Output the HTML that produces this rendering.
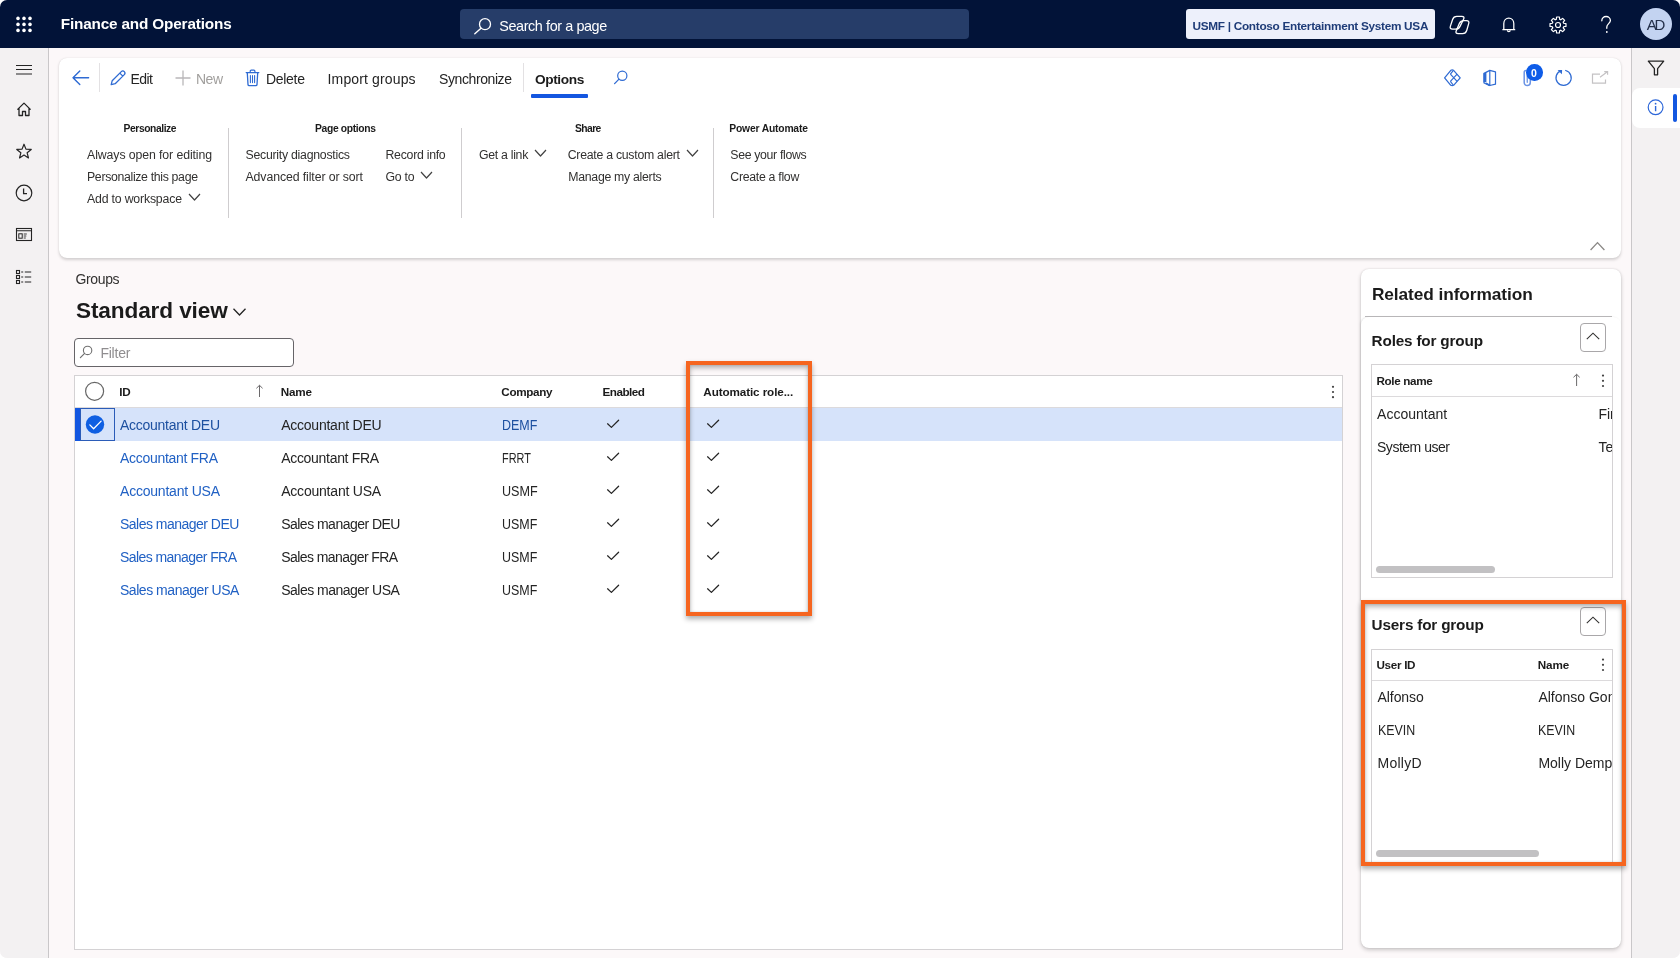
<!DOCTYPE html><html><head><meta charset="utf-8"><style>
html,body{margin:0;padding:0;background:#ffffff;}
body{width:1680px;height:958px;overflow:hidden;position:relative;font-family:"Liberation Sans",sans-serif;}
#app{position:absolute;left:0;top:0;width:1680px;height:958px;background:#fcf8f9;border-radius:7px;overflow:hidden;}
.a{position:absolute;}
.t{position:absolute;line-height:1;white-space:nowrap;}
#app{will-change:transform;}
</style></head><body><div id="app">
<div class="a" style="left:0px;top:0px;width:1680px;height:48px;background:#021338;"></div>
<svg class="a" style="left:0px;top:0px;" width="48" height="48" viewBox="0 0 48 48" fill="none"><circle cx="18" cy="18.4" r="1.8" fill="#fff"/><circle cx="24" cy="18.4" r="1.8" fill="#fff"/><circle cx="30" cy="18.4" r="1.8" fill="#fff"/><circle cx="18" cy="24.4" r="1.8" fill="#fff"/><circle cx="24" cy="24.4" r="1.8" fill="#fff"/><circle cx="30" cy="24.4" r="1.8" fill="#fff"/><circle cx="18" cy="30.4" r="1.8" fill="#fff"/><circle cx="24" cy="30.4" r="1.8" fill="#fff"/><circle cx="30" cy="30.4" r="1.8" fill="#fff"/></svg>
<div class="t" style="left:60.7px;top:16.00px;font-size:15.3px;font-weight:700;color:#ffffff;letter-spacing:-0.156px;">Finance and Operations</div>
<div class="a" style="left:459.5px;top:9px;width:509.5px;height:29.5px;background:#263d69;border-radius:4px;"></div>
<svg class="a" style="left:472px;top:16px;" width="20" height="20" viewBox="0 0 20 20" fill="none"><circle cx="13" cy="8.2" r="5.5" stroke="#fff" stroke-width="1.3"/><path d="M9 12.2 L2.8 17.8" stroke="#fff" stroke-width="1.4" stroke-linecap="round"/></svg>
<div class="t" style="left:499.3px;top:18.80px;font-size:14.4px;font-weight:400;color:#ffffff;letter-spacing:-0.405px;">Search for a page</div>
<div class="a" style="left:1186px;top:9px;width:249px;height:29.5px;background:#edf0fb;border-radius:3px;"></div>
<div class="t" style="left:1192.5px;top:21.00px;font-size:11.8px;font-weight:700;color:#1f3c78;letter-spacing:-0.295px;">USMF | Contoso Entertainment System USA</div>
<svg class="a" style="left:1446px;top:13px;" width="26" height="24" viewBox="0 0 26 24" fill="none"><path d="M6.60 6.44 Q7.60 3.40 10.80 3.40 L15.80 3.40 Q19.00 3.40 17.57 6.26 L14.03 13.34 Q12.60 16.20 9.40 16.20 L6.60 16.20 Q3.40 16.20 4.40 13.16 Z" stroke="#fff" stroke-width="1.3" stroke-linejoin="round"/><path d="M13.33 10.54 Q14.60 7.60 17.80 7.60 L20.40 7.60 Q23.60 7.60 22.70 10.67 L20.70 17.53 Q19.80 20.60 16.60 20.60 L12.20 20.60 Q9.00 20.60 10.27 17.66 Z" stroke="#fff" stroke-width="1.3" stroke-linejoin="round"/></svg>
<svg class="a" style="left:1500px;top:16px;" width="18" height="18" viewBox="0 0 18 18" fill="none"><path d="M3.8 13.6 V7.4 c0 -3.1 2.2 -5.3 5 -5.3 s5 2.2 5 5.3 V13.6" stroke="#fff" stroke-width="1.25"/><path d="M2.9 13.7 H14.7" stroke="#fff" stroke-width="1.3" stroke-linecap="round"/><path d="M7.4 14.2 a1.4 1.4 0 0 0 2.8 0" stroke="#fff" stroke-width="1.2"/></svg>
<svg class="a" style="left:1548.6px;top:16.1px;" width="18" height="18" viewBox="0 0 18 18" fill="none"><path d="M7.28 3.36 L7.59 1.02 L10.41 1.02 L10.72 3.36 L11.77 3.79 L13.65 2.36 L15.64 4.35 L14.21 6.23 L14.64 7.28 L16.98 7.59 L16.98 10.41 L14.64 10.72 L14.21 11.77 L15.64 13.65 L13.65 15.64 L11.77 14.21 L10.72 14.64 L10.41 16.98 L7.59 16.98 L7.28 14.64 L6.23 14.21 L4.35 15.64 L2.36 13.65 L3.79 11.77 L3.36 10.72 L1.02 10.41 L1.02 7.59 L3.36 7.28 L3.79 6.23 L2.36 4.35 L4.35 2.36 L6.23 3.79Z" stroke="#fff" stroke-width="1.2" stroke-linejoin="round"/><circle cx="9" cy="9" r="2.5" stroke="#fff" stroke-width="1.2"/></svg>
<svg class="a" style="left:1598px;top:15px;" width="16" height="20" viewBox="0 0 16 20" fill="none"><path d="M3.8 5.8 c0 -2.6 1.9 -4.3 4.3 -4.3 s4.3 1.7 4.3 4 c0 2.8 -3.6 3.5 -3.6 6.5 v1.3" stroke="#fff" stroke-width="1.3" stroke-linecap="round"/><circle cx="8.8" cy="17" r="0.9" fill="#fff"/></svg>
<div class="a" style="left:1640px;top:8px;width:32px;height:32px;background:#c3d3f1;border-radius:50%;"></div>
<div class="t" style="left:1646.8px;top:16.50px;font-size:15px;font-weight:400;color:#24304a;letter-spacing:-2.237px;">AD</div>
<div class="a" style="left:0px;top:48px;width:48px;height:910px;background:#f3f1f2;"></div>
<div class="a" style="left:48px;top:48px;width:1px;height:910px;background:#c9c7c9;"></div>
<svg class="a" style="left:14px;top:60px;" width="20" height="20" viewBox="0 0 20 20" fill="none"><path d="M2 5.5 H18 M2 9.5 H18 M2 14 H18" stroke="#242424" stroke-width="1.1"/></svg>
<svg class="a" style="left:14px;top:100px;" width="20" height="20" viewBox="0 0 20 20" fill="none"><path d="M3.4 9.6 L10 3.1 L16.6 9.6 M5 8.2 V15.5 H8.5 V11.5 H11.5 V15.5 H15 V8.2" stroke="#242424" stroke-width="1.3" stroke-linejoin="round"/></svg>
<svg class="a" style="left:14px;top:141px;" width="20" height="20" viewBox="0 0 20 20" fill="none"><path d="M10.00 3.20 L11.94 8.13 L17.23 8.45 L13.14 11.82 L14.47 16.95 L10.00 14.10 L5.53 16.95 L6.86 11.82 L2.77 8.45 L8.06 8.13Z" stroke="#242424" stroke-width="1.2" stroke-linejoin="round"/></svg>
<svg class="a" style="left:14px;top:183px;" width="20" height="20" viewBox="0 0 20 20" fill="none"><circle cx="10" cy="10" r="7.8" stroke="#242424" stroke-width="1.2"/><path d="M9.6 5.5 V10.6 H13" stroke="#242424" stroke-width="1.3"/></svg>
<svg class="a" style="left:14px;top:224px;" width="20" height="20" viewBox="0 0 20 20" fill="none"><rect x="2.5" y="4.5" width="15" height="12" stroke="#242424" stroke-width="1.1"/><path d="M2.5 6.8 H17.5" stroke="#242424" stroke-width="1.1"/><rect x="4.8" y="9.8" width="3.4" height="4.4" stroke="#242424" stroke-width="1"/><path d="M9.7 10 H12.8 M9.7 12 H12.3 M9.7 14 H11.8" stroke="#242424" stroke-width="0.9"/></svg>
<svg class="a" style="left:14px;top:267px;" width="20" height="20" viewBox="0 0 20 20" fill="none"><rect x="2.5" y="3.5" width="3" height="3" stroke="#242424" stroke-width="1.1"/><rect x="2.5" y="8.5" width="3" height="3" stroke="#242424" stroke-width="1.1"/><rect x="2.5" y="13.5" width="3" height="3" stroke="#242424" stroke-width="1.1"/><path d="M7.2 5 H9.2 M10.8 5 H17.2 M7.2 10 H9.2 M10.8 10 H17.2 M7.2 15 H9.2 M10.8 15 H17.2" stroke="#242424" stroke-width="1.1"/></svg>
<div class="a" style="left:1632px;top:48px;width:48px;height:910px;background:#f3f1f2;"></div>
<div class="a" style="left:1631px;top:48px;width:1px;height:910px;background:#c9c7c9;"></div>
<svg class="a" style="left:1646px;top:59px;" width="20" height="18" viewBox="0 0 20 18" fill="none"><path d="M2.3 2.2 H17.7 L11.6 9.6 V15.8 H8.4 V9.6 Z" stroke="#242424" stroke-width="1.3" stroke-linejoin="round"/></svg>
<div class="a" style="left:1632px;top:88px;width:48px;height:40px;background:#ffffff;border-radius:8px 0 0 8px;"></div>
<div class="a" style="left:1673px;top:94px;width:4px;height:28px;background:#1257e0;border-radius:2px;"></div>
<svg class="a" style="left:1646px;top:98px;" width="20" height="20" viewBox="0 0 20 20" fill="none"><circle cx="9.6" cy="9.3" r="7.4" stroke="#2c66d8" stroke-width="1.2"/><path d="M9.6 8 V13.2" stroke="#2c66d8" stroke-width="1.4"/><circle cx="9.6" cy="5.7" r="0.9" fill="#2c66d8"/></svg>
<div class="a" style="left:59px;top:58px;width:1562px;height:200px;background:#ffffff;border-radius:8px;box-shadow:0 1.5px 3px rgba(0,0,0,0.16),0 0 1px rgba(0,0,0,0.10);"></div>
<svg class="a" style="left:70px;top:68px;" width="20" height="20" viewBox="0 0 20 20" fill="none"><path d="M3 9.8 H18.6 M9.8 3 L3 9.8 L9.8 16.6" stroke="#2f6bd3" stroke-width="1.4" stroke-linejoin="round" stroke-linecap="round"/></svg>
<div class="a" style="left:99px;top:63px;width:1px;height:29px;background:#e3e1e3;"></div>
<svg class="a" style="left:108px;top:69px;" width="20" height="18" viewBox="0 0 20 18" fill="none"><path d="M3.2 15.6 L4.2 11.7 L13.3 2.6 c0.9 -0.9 2.2 -0.9 3 0 s0.9 2.1 0 3 L7.2 14.7 Z M11.8 4.1 L14.8 7.1" stroke="#2f6bd3" stroke-width="1.3" stroke-linejoin="round"/></svg>
<div class="t" style="left:130.5px;top:72.30px;font-size:14px;font-weight:400;color:#242424;letter-spacing:-0.575px;">Edit</div>
<svg class="a" style="left:173px;top:68px;" width="20" height="20" viewBox="0 0 20 20" fill="none"><path d="M10 2.5 V17.5 M2.5 10 H17.5" stroke="#b9b7b9" stroke-width="1.3"/></svg>
<div class="t" style="left:196px;top:72.30px;font-size:14px;font-weight:400;color:#a19f9d;letter-spacing:-0.503px;">New</div>
<svg class="a" style="left:244px;top:68px;" width="18" height="20" viewBox="0 0 18 20" fill="none"><path d="M2.2 4.6 H14.8" stroke="#2f6bd3" stroke-width="1.3" stroke-linecap="round"/><path d="M6.2 4.3 V3.2 c0 -0.6 0.4 -1 1 -1 h2.7 c0.6 0 1 0.4 1 1 V4.3" stroke="#2f6bd3" stroke-width="1.2"/><path d="M3.3 4.8 L4 16.6 c0.05 0.7 0.5 1.1 1.2 1.1 h6.6 c0.7 0 1.15 -0.4 1.2 -1.1 L13.7 4.8" stroke="#2f6bd3" stroke-width="1.3" stroke-linejoin="round"/><path d="M6.4 7.6 V14.6 M8.5 7.6 V14.6 M10.6 7.6 V14.6" stroke="#2f6bd3" stroke-width="1.1" stroke-linecap="round"/></svg>
<div class="t" style="left:266px;top:72.30px;font-size:14px;font-weight:400;color:#242424;letter-spacing:-0.294px;">Delete</div>
<div class="t" style="left:327.6px;top:72.30px;font-size:14px;font-weight:400;color:#242424;letter-spacing:0.136px;">Import groups</div>
<div class="t" style="left:439px;top:72.30px;font-size:14px;font-weight:400;color:#242424;letter-spacing:-0.404px;">Synchronize</div>
<div class="a" style="left:523px;top:63px;width:1px;height:29px;background:#e3e1e3;"></div>
<div class="t" style="left:534.9px;top:73.30px;font-size:13.7px;font-weight:700;color:#1c1c1c;letter-spacing:-0.375px;">Options</div>
<div class="a" style="left:531px;top:94px;width:57px;height:3.5px;background:#1456e0;border-radius:1px;"></div>
<svg class="a" style="left:612px;top:69px;" width="18" height="18" viewBox="0 0 18 18" fill="none"><circle cx="10.3" cy="6.8" r="4.6" stroke="#2f6bd3" stroke-width="1.2"/><path d="M7 10.1 L2.6 14.6" stroke="#2f6bd3" stroke-width="1.3" stroke-linecap="round"/></svg>
<div class="t" style="left:123.6px;top:124.40px;font-size:10.3px;font-weight:700;color:#1b1b1b;letter-spacing:-0.425px;">Personalize</div>
<div class="t" style="left:315px;top:124.40px;font-size:10.3px;font-weight:700;color:#1b1b1b;letter-spacing:-0.333px;">Page options</div>
<div class="t" style="left:575px;top:124.40px;font-size:10.3px;font-weight:700;color:#1b1b1b;letter-spacing:-0.582px;">Share</div>
<div class="t" style="left:729.3px;top:124.40px;font-size:10.3px;font-weight:700;color:#1b1b1b;letter-spacing:-0.174px;">Power Automate</div>
<div class="t" style="left:87.1px;top:149.00px;font-size:12.3px;font-weight:400;color:#323130;letter-spacing:-0.099px;">Always open for editing</div>
<div class="t" style="left:87px;top:171.00px;font-size:12.3px;font-weight:400;color:#323130;letter-spacing:-0.330px;">Personalize this page</div>
<div class="t" style="left:87px;top:193.00px;font-size:12.3px;font-weight:400;color:#323130;letter-spacing:-0.185px;">Add to workspace</div>
<svg class="a" style="left:187.5px;top:192.5px;" width="13" height="8" viewBox="0 0 13 8" fill="none"><path d="M1 1 L6.5 7 L12 1" stroke="#424242" stroke-width="1.2" stroke-linejoin="round"/></svg>
<div class="a" style="left:228px;top:128px;width:1.2px;height:90px;background:#cfcdcf;"></div>
<div class="t" style="left:245.5px;top:149.00px;font-size:12.3px;font-weight:400;color:#323130;letter-spacing:-0.257px;">Security diagnostics</div>
<div class="t" style="left:245.5px;top:171.00px;font-size:12.3px;font-weight:400;color:#323130;letter-spacing:-0.097px;">Advanced filter or sort</div>
<div class="t" style="left:385.5px;top:149.00px;font-size:12.3px;font-weight:400;color:#323130;letter-spacing:-0.270px;">Record info</div>
<div class="t" style="left:385.5px;top:171.00px;font-size:12.3px;font-weight:400;color:#323130;letter-spacing:-0.271px;">Go to</div>
<svg class="a" style="left:420px;top:170.5px;" width="13" height="8" viewBox="0 0 13 8" fill="none"><path d="M1 1 L6.5 7 L12 1" stroke="#424242" stroke-width="1.2" stroke-linejoin="round"/></svg>
<div class="a" style="left:461px;top:128px;width:1.2px;height:90px;background:#cfcdcf;"></div>
<div class="t" style="left:479px;top:149.00px;font-size:12.3px;font-weight:400;color:#323130;letter-spacing:-0.295px;">Get a link</div>
<svg class="a" style="left:534.3px;top:148.5px;" width="13" height="8" viewBox="0 0 13 8" fill="none"><path d="M1 1 L6.5 7 L12 1" stroke="#424242" stroke-width="1.2" stroke-linejoin="round"/></svg>
<div class="t" style="left:567.7px;top:149.00px;font-size:12.3px;font-weight:400;color:#323130;letter-spacing:-0.264px;">Create a custom alert</div>
<svg class="a" style="left:686px;top:148.5px;" width="13" height="8" viewBox="0 0 13 8" fill="none"><path d="M1 1 L6.5 7 L12 1" stroke="#424242" stroke-width="1.2" stroke-linejoin="round"/></svg>
<div class="t" style="left:568.3px;top:171.00px;font-size:12.3px;font-weight:400;color:#323130;letter-spacing:-0.290px;">Manage my alerts</div>
<div class="a" style="left:712.5px;top:128px;width:1.2px;height:90px;background:#cfcdcf;"></div>
<div class="t" style="left:730.3px;top:149.00px;font-size:12.3px;font-weight:400;color:#323130;letter-spacing:-0.329px;">See your flows</div>
<div class="t" style="left:730.3px;top:171.00px;font-size:12.3px;font-weight:400;color:#323130;letter-spacing:-0.289px;">Create a flow</div>
<svg class="a" style="left:1589px;top:240px;" width="17" height="12" viewBox="0 0 17 12" fill="none"><path d="M1.6 10 L8.5 2.6 L15.4 10" stroke="#8a8886" stroke-width="1.3"/></svg>
<svg class="a" style="left:1440px;top:66px;" width="24" height="24" viewBox="0 0 24 24" fill="none"><path d="M4.6 11.8 L10.8 4.3 Q12.2 3.6 13.6 4.3 L20.2 11.8 L13.6 19.3 Q12.2 20 10.8 19.3 Z" stroke="#2f6bd3" stroke-width="1.25" stroke-linejoin="round"/><path d="M10.4 8.2 L17.1 15.4 M17.1 8.2 L10.4 15.4 M10.4 8.2 L13.2 4.6 M10.4 15.4 L13.2 19" stroke="#2f6bd3" stroke-width="1.2" stroke-linejoin="round"/></svg>
<svg class="a" style="left:1480px;top:66px;" width="20" height="24" viewBox="0 0 20 24" fill="none"><path d="M4 7.4 L9.8 4.4 L15.5 5.8 V18.2 L9.8 19.5 L4 17 Z" stroke="#2f6bd3" stroke-width="1.2" stroke-linejoin="round"/><path d="M9.8 4.4 V19.5" stroke="#2f6bd3" stroke-width="1.2"/><path d="M3.5 7.2 L6.4 6.4 V16.2 L3.5 16.2 Z" fill="#2f6bd3"/><path d="M6 17.2 L9.8 19.5" stroke="#2f6bd3" stroke-width="1.8"/></svg>
<svg class="a" style="left:1518px;top:66px;" width="16" height="24" viewBox="0 0 16 24" fill="none"><path d="M12.3 8 V16.5 a3.05 3.05 0 0 1 -6.1 0 V6.6 a2 2 0 0 1 2 -2" stroke="#6a93e4" stroke-width="1.5" stroke-linecap="round"/><path d="M9.25 10.5 V16.3" stroke="#6a93e4" stroke-width="1.3" stroke-linecap="round"/></svg>
<div class="a" style="left:1526px;top:64px;width:16.5px;height:16.5px;background:#0e5ce8;border-radius:50%;"></div>
<div class="t" style="left:1530.9px;top:67.60px;font-size:10.5px;font-weight:700;color:#ffffff;">0</div>
<svg class="a" style="left:1554px;top:66px;" width="20" height="24" viewBox="0 0 20 24" fill="none"><path d="M11.69 4.49 A7.6 7.6 0 1 1 7.25 4.57" stroke="#2f6bd3" stroke-width="1.25" stroke-linecap="round"/><path d="M3.6 4.1 L8.1 3.9 L7.9 8.2 Z" fill="#2f6bd3"/></svg>
<svg class="a" style="left:1590px;top:66px;" width="20" height="24" viewBox="0 0 20 24" fill="none"><path d="M10 8.2 H2.5 V17.2 H15.5 V13.5" stroke="#c4c2c4" stroke-width="1.2"/><path d="M10 11.2 L17.4 5.8 M14.2 5.6 H17.6 V8.8" stroke="#c4c2c4" stroke-width="1.2"/></svg>
<div class="t" style="left:75.4px;top:271.80px;font-size:14px;font-weight:400;color:#323130;letter-spacing:-0.342px;">Groups</div>
<div class="t" style="left:76px;top:299.60px;font-size:22.6px;font-weight:700;color:#1b1b1b;letter-spacing:-0.119px;">Standard view</div>
<svg class="a" style="left:232px;top:307px;" width="15" height="10" viewBox="0 0 15 10" fill="none"><path d="M1.5 1.8 L7.5 8 L13.5 1.8" stroke="#242424" stroke-width="1.3"/></svg>
<div class="a" style="left:74px;top:337.5px;width:217.5px;height:27px;background:#ffffff;border:1.3px solid #666468;border-radius:4px;"></div>
<svg class="a" style="left:78px;top:344px;" width="16" height="16" viewBox="0 0 16 16" fill="none"><circle cx="9.6" cy="6.4" r="4.2" stroke="#707070" stroke-width="1.1"/><path d="M6.6 9.4 L2.4 13.6" stroke="#707070" stroke-width="1.2" stroke-linecap="round"/></svg>
<div class="t" style="left:100.4px;top:345.60px;font-size:14px;font-weight:400;color:#8f8d8f;letter-spacing:-0.222px;">Filter</div>
<div class="a" style="left:74px;top:375px;width:1267px;height:573px;background:#ffffff;border:1px solid #d4d2d4;"></div>
<div class="a" style="left:75px;top:407px;width:1267px;height:1px;background:#dcdadc;"></div>
<svg class="a" style="left:84px;top:381px;" width="22" height="22" viewBox="0 0 22 22" fill="none"><circle cx="10.6" cy="10.3" r="9" stroke="#666" stroke-width="1.2"/></svg>
<div class="t" style="left:119.2px;top:386.40px;font-size:11.7px;font-weight:700;color:#1b1b1b;letter-spacing:-0.100px;">ID</div>
<svg class="a" style="left:253px;top:383px;" width="12" height="16" viewBox="0 0 12 16" fill="none"><path d="M6.5 14 V2.3 M3.4 5.3 L6.5 2.3 L9.6 5.3" stroke="#6b696b" stroke-width="1"/></svg>
<div class="t" style="left:280.7px;top:386.40px;font-size:11.7px;font-weight:700;color:#1b1b1b;letter-spacing:-0.189px;">Name</div>
<div class="t" style="left:501.3px;top:386.40px;font-size:11.7px;font-weight:700;color:#1b1b1b;letter-spacing:-0.351px;">Company</div>
<div class="t" style="left:602.5px;top:386.40px;font-size:11.7px;font-weight:700;color:#1b1b1b;letter-spacing:-0.501px;">Enabled</div>
<div class="t" style="left:703.3px;top:386.40px;font-size:11.7px;font-weight:700;color:#1b1b1b;letter-spacing:-0.104px;">Automatic role...</div>
<svg class="a" style="left:1327px;top:383px;" width="12" height="18" viewBox="0 0 12 18" fill="none"><circle cx="6" cy="3.8" r="1.1" fill="#424242"/><circle cx="6" cy="9" r="1.1" fill="#424242"/><circle cx="6" cy="14.2" r="1.1" fill="#424242"/></svg>
<div class="a" style="left:75px;top:408px;width:1267px;height:33px;background:#d6e3fa;"></div>
<div class="a" style="left:75px;top:408px;width:4.5px;height:33px;background:#1256e0;"></div>
<div class="a" style="left:79.5px;top:408px;width:35.5px;height:33px;box-sizing:border-box;border:1px solid #2b5cb8;"></div>
<svg class="a" style="left:84px;top:413px;" width="22" height="22" viewBox="0 0 22 22" fill="none"><circle cx="11" cy="11.5" r="9.2" fill="#0f5fe2"/><path d="M5.8 11.9 L9.6 15.7 L17.1 8.1" stroke="#fff" stroke-width="1.3" stroke-linecap="round" stroke-linejoin="round"/></svg>
<div class="t" style="left:120px;top:417.70px;font-size:14px;font-weight:400;color:#1d50a0;letter-spacing:-0.269px;">Accountant DEU</div>
<div class="t" style="left:281.2px;top:417.70px;font-size:14px;font-weight:400;color:#242424;letter-spacing:-0.238px;">Accountant DEU</div>
<div class="t" style="left:502.3px;top:417.70px;font-size:14.3px;font-weight:400;color:#1d50a0;transform:scaleX(0.8738);transform-origin:0 0;">DEMF</div>
<svg class="a" style="left:605.5px;top:418px;" width="15" height="13" viewBox="0 0 15 13" fill="none"><path d="M1.6 5.8 L5.4 9.4 L12.6 2.2" stroke="#242424" stroke-width="1.25" stroke-linejoin="round" stroke-linecap="round"/></svg>
<svg class="a" style="left:706px;top:418px;" width="15" height="13" viewBox="0 0 15 13" fill="none"><path d="M1.6 5.8 L5.4 9.4 L12.6 2.2" stroke="#242424" stroke-width="1.25" stroke-linejoin="round" stroke-linecap="round"/></svg>
<div class="t" style="left:120px;top:450.70px;font-size:14px;font-weight:400;color:#2161c4;letter-spacing:-0.303px;">Accountant FRA</div>
<div class="t" style="left:281.2px;top:450.70px;font-size:14px;font-weight:400;color:#242424;letter-spacing:-0.303px;">Accountant FRA</div>
<div class="t" style="left:502.3px;top:450.70px;font-size:14.3px;font-weight:400;color:#242424;transform:scaleX(0.7607);transform-origin:0 0;">FRRT</div>
<svg class="a" style="left:605.5px;top:451px;" width="15" height="13" viewBox="0 0 15 13" fill="none"><path d="M1.6 5.8 L5.4 9.4 L12.6 2.2" stroke="#242424" stroke-width="1.25" stroke-linejoin="round" stroke-linecap="round"/></svg>
<svg class="a" style="left:706px;top:451px;" width="15" height="13" viewBox="0 0 15 13" fill="none"><path d="M1.6 5.8 L5.4 9.4 L12.6 2.2" stroke="#242424" stroke-width="1.25" stroke-linejoin="round" stroke-linecap="round"/></svg>
<div class="t" style="left:120px;top:483.70px;font-size:14px;font-weight:400;color:#2161c4;letter-spacing:-0.210px;">Accountant USA</div>
<div class="t" style="left:281.2px;top:483.70px;font-size:14px;font-weight:400;color:#242424;letter-spacing:-0.210px;">Accountant USA</div>
<div class="t" style="left:502.3px;top:483.70px;font-size:14.3px;font-weight:400;color:#242424;transform:scaleX(0.8812);transform-origin:0 0;">USMF</div>
<svg class="a" style="left:605.5px;top:484px;" width="15" height="13" viewBox="0 0 15 13" fill="none"><path d="M1.6 5.8 L5.4 9.4 L12.6 2.2" stroke="#242424" stroke-width="1.25" stroke-linejoin="round" stroke-linecap="round"/></svg>
<svg class="a" style="left:706px;top:484px;" width="15" height="13" viewBox="0 0 15 13" fill="none"><path d="M1.6 5.8 L5.4 9.4 L12.6 2.2" stroke="#242424" stroke-width="1.25" stroke-linejoin="round" stroke-linecap="round"/></svg>
<div class="t" style="left:120px;top:516.70px;font-size:14px;font-weight:400;color:#2161c4;letter-spacing:-0.513px;">Sales manager DEU</div>
<div class="t" style="left:281.2px;top:516.70px;font-size:14px;font-weight:400;color:#242424;letter-spacing:-0.520px;">Sales manager DEU</div>
<div class="t" style="left:502.3px;top:516.70px;font-size:14.3px;font-weight:400;color:#242424;transform:scaleX(0.8713);transform-origin:0 0;">USMF</div>
<svg class="a" style="left:605.5px;top:517px;" width="15" height="13" viewBox="0 0 15 13" fill="none"><path d="M1.6 5.8 L5.4 9.4 L12.6 2.2" stroke="#242424" stroke-width="1.25" stroke-linejoin="round" stroke-linecap="round"/></svg>
<svg class="a" style="left:706px;top:517px;" width="15" height="13" viewBox="0 0 15 13" fill="none"><path d="M1.6 5.8 L5.4 9.4 L12.6 2.2" stroke="#242424" stroke-width="1.25" stroke-linejoin="round" stroke-linecap="round"/></svg>
<div class="t" style="left:120px;top:549.70px;font-size:14px;font-weight:400;color:#2161c4;letter-spacing:-0.566px;">Sales manager FRA</div>
<div class="t" style="left:281.2px;top:549.70px;font-size:14px;font-weight:400;color:#242424;letter-spacing:-0.566px;">Sales manager FRA</div>
<div class="t" style="left:502.3px;top:549.70px;font-size:14.3px;font-weight:400;color:#242424;transform:scaleX(0.8713);transform-origin:0 0;">USMF</div>
<svg class="a" style="left:605.5px;top:550px;" width="15" height="13" viewBox="0 0 15 13" fill="none"><path d="M1.6 5.8 L5.4 9.4 L12.6 2.2" stroke="#242424" stroke-width="1.25" stroke-linejoin="round" stroke-linecap="round"/></svg>
<svg class="a" style="left:706px;top:550px;" width="15" height="13" viewBox="0 0 15 13" fill="none"><path d="M1.6 5.8 L5.4 9.4 L12.6 2.2" stroke="#242424" stroke-width="1.25" stroke-linejoin="round" stroke-linecap="round"/></svg>
<div class="t" style="left:120px;top:582.70px;font-size:14px;font-weight:400;color:#2161c4;letter-spacing:-0.465px;">Sales manager USA</div>
<div class="t" style="left:281.2px;top:582.70px;font-size:14px;font-weight:400;color:#242424;letter-spacing:-0.515px;">Sales manager USA</div>
<div class="t" style="left:502.3px;top:582.70px;font-size:14.3px;font-weight:400;color:#242424;transform:scaleX(0.8713);transform-origin:0 0;">USMF</div>
<svg class="a" style="left:605.5px;top:583px;" width="15" height="13" viewBox="0 0 15 13" fill="none"><path d="M1.6 5.8 L5.4 9.4 L12.6 2.2" stroke="#242424" stroke-width="1.25" stroke-linejoin="round" stroke-linecap="round"/></svg>
<svg class="a" style="left:706px;top:583px;" width="15" height="13" viewBox="0 0 15 13" fill="none"><path d="M1.6 5.8 L5.4 9.4 L12.6 2.2" stroke="#242424" stroke-width="1.25" stroke-linejoin="round" stroke-linecap="round"/></svg>
<div class="a" style="left:686px;top:361px;width:126px;height:255px;box-sizing:border-box;border:4px solid #f6651f;box-shadow:0 3px 5px rgba(0,0,0,0.32), inset 0 3px 5px rgba(0,0,0,0.28), inset 0 0 2px rgba(0,0,0,0.15);"></div>
<div class="a" style="left:1361px;top:269px;width:260px;height:679px;background:#ffffff;border-radius:8px;box-shadow:0 2px 4px rgba(0,0,0,0.20),0 0 2px rgba(0,0,0,0.12);"></div>
<div class="t" style="left:1371.9px;top:286.00px;font-size:17.3px;font-weight:700;color:#1b1b1b;letter-spacing:-0.080px;">Related information</div>
<div class="a" style="left:1365px;top:315.5px;width:247px;height:1.3px;background:#bdbbbd;"></div>
<div class="a" style="left:1361px;top:317px;width:260px;height:284px;background:#ffffff;border-radius:8px 8px 0 0;box-shadow:-1px 0 2px rgba(0,0,0,0.10);"></div>
<div class="t" style="left:1371.6px;top:332.50px;font-size:15.3px;font-weight:700;color:#1b1b1b;letter-spacing:-0.178px;">Roles for group</div>
<div class="a" style="left:1580px;top:322.5px;width:26px;height:29.5px;box-sizing:border-box;border:1px solid #a9a7a9;border-radius:4px;background:#fff;"></div>
<svg class="a" style="left:1585px;top:331.5px;" width="16" height="10" viewBox="0 0 16 10" fill="none"><path d="M1.8 7.2 L8 1.2 L14.2 7.2" stroke="#323130" stroke-width="1.1"/></svg>
<div class="a" style="left:1371px;top:364px;width:242px;height:214px;box-sizing:border-box;border:1px solid #d4d2d4;background:#fff;"></div>
<div class="a" style="left:1372px;top:396px;width:240px;height:1px;background:#dcdadc;"></div>
<div class="t" style="left:1376.4px;top:375.00px;font-size:11.7px;font-weight:700;color:#1b1b1b;letter-spacing:-0.334px;">Role name</div>
<svg class="a" style="left:1570px;top:373px;" width="12" height="14" viewBox="0 0 12 14" fill="none"><path d="M6.6 13 V1.3 M3.5 4.3 L6.6 1.3 L9.7 4.3" stroke="#6b696b" stroke-width="1"/></svg>
<svg class="a" style="left:1599px;top:373px;" width="8" height="16" viewBox="0 0 8 16" fill="none"><circle cx="4" cy="2.6" r="1.1" fill="#424242"/><circle cx="4" cy="7.8" r="1.1" fill="#424242"/><circle cx="4" cy="13" r="1.1" fill="#424242"/></svg>
<div class="t" style="left:1377.1px;top:406.80px;font-size:14px;font-weight:400;color:#242424;letter-spacing:-0.005px;">Accountant</div>
<div class="t" style="left:1377px;top:440.00px;font-size:14px;font-weight:400;color:#242424;letter-spacing:-0.480px;">System user</div>
<div class="a" style="left:1597px;top:400px;width:15px;height:80px;overflow:hidden;"><div class="t" style="left:1.4px;top:6.80px;font-size:14px;font-weight:400;color:#242424;">Fin</div>
<div class="t" style="left:1.4px;top:40.00px;font-size:14px;font-weight:400;color:#242424;">Tes</div>
</div>
<div class="a" style="left:1376px;top:566px;width:119px;height:7px;background:#c2c1c3;border-radius:4px;"></div>
<div class="a" style="left:1361px;top:601px;width:260px;height:264px;background:#ffffff;"></div>
<div class="t" style="left:1371.6px;top:616.50px;font-size:15.3px;font-weight:700;color:#1b1b1b;letter-spacing:-0.183px;">Users for group</div>
<div class="a" style="left:1580px;top:606.5px;width:26px;height:29.5px;box-sizing:border-box;border:1px solid #a9a7a9;border-radius:4px;background:#fff;"></div>
<svg class="a" style="left:1585px;top:615.5px;" width="16" height="10" viewBox="0 0 16 10" fill="none"><path d="M1.8 7.2 L8 1.2 L14.2 7.2" stroke="#323130" stroke-width="1.1"/></svg>
<div class="a" style="left:1371px;top:648.5px;width:242px;height:216px;box-sizing:border-box;border:1px solid #d4d2d4;border-bottom:none;background:#fff;"></div>
<div class="a" style="left:1372px;top:680px;width:240px;height:1px;background:#dcdadc;"></div>
<div class="t" style="left:1376.4px;top:659.20px;font-size:11.7px;font-weight:700;color:#1b1b1b;letter-spacing:-0.295px;">User ID</div>
<div class="t" style="left:1537.8px;top:659.20px;font-size:11.7px;font-weight:700;color:#1b1b1b;letter-spacing:-0.156px;">Name</div>
<svg class="a" style="left:1599px;top:657px;" width="8" height="16" viewBox="0 0 8 16" fill="none"><circle cx="4" cy="2.6" r="1.1" fill="#424242"/><circle cx="4" cy="7.8" r="1.1" fill="#424242"/><circle cx="4" cy="13" r="1.1" fill="#424242"/></svg>
<div class="t" style="left:1377.5px;top:690.00px;font-size:14px;font-weight:400;color:#242424;letter-spacing:-0.066px;">Alfonso</div>
<div class="t" style="left:1377.5px;top:723.20px;font-size:14px;font-weight:400;color:#242424;transform:scaleX(0.8878);transform-origin:0 0;">KEVIN</div>
<div class="t" style="left:1377.5px;top:756.40px;font-size:14px;font-weight:400;color:#242424;letter-spacing:0.244px;">MollyD</div>
<div class="a" style="left:1537px;top:684px;width:75px;height:100px;overflow:hidden;"><div class="t" style="left:1.4px;top:6.00px;font-size:14px;font-weight:400;color:#242424;">Alfonso Gonzales</div>
<div class="t" style="left:1.4px;top:39.20px;font-size:14px;font-weight:400;color:#242424;transform:scaleX(0.8854);transform-origin:0 0;">KEVIN</div>
<div class="t" style="left:1.4px;top:72.40px;font-size:14px;font-weight:400;color:#242424;">Molly Dempsey</div>
</div>
<div class="a" style="left:1376px;top:850px;width:163px;height:7px;background:#c2c1c3;border-radius:4px;"></div>
<div class="a" style="left:1361px;top:600px;width:264.5px;height:265.5px;box-sizing:border-box;border:4px solid #f6651f;box-shadow:0 3px 5px rgba(0,0,0,0.32), inset 0 3px 5px rgba(0,0,0,0.28), inset 0 0 2px rgba(0,0,0,0.15);"></div>
</div></body></html>
